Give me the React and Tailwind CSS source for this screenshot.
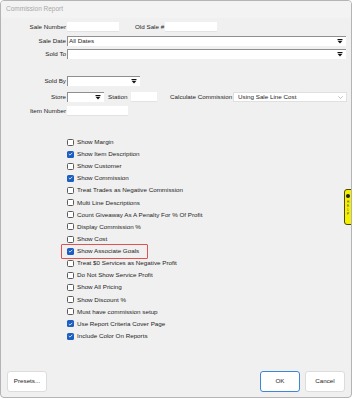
import React from "react";

const OPTIONS = [
  { label: "Show Margin", checked: false },
  { label: "Show Item Description", checked: true },
  { label: "Show Customer", checked: false },
  { label: "Show Commission", checked: true },
  { label: "Treat Trades as Negative Commission", checked: false },
  { label: "Multi Line Descriptions", checked: false },
  { label: "Count Giveaway As A Penalty For % Of Profit", checked: false },
  { label: "Display Commission %", checked: false },
  { label: "Show Cost", checked: false },
  { label: "Show Associate Goals", checked: true, highlight: true },
  { label: "Treat $0 Services as Negative Profit", checked: false },
  { label: "Do Not Show Service Profit", checked: false },
  { label: "Show All Pricing", checked: false },
  { label: "Show Discount %", checked: false },
  { label: "Must have commission setup", checked: false },
  { label: "Use Report Criteria Cover Page", checked: true },
  { label: "Include Color On Reports", checked: true }
];

const Arrow = () => (
  <svg width="6" height="5" viewBox="0 0 6 5" className="shrink-0">
    <rect x="0.5" y="0" width="5" height="1" fill="#111" />
    <path d="M0.5 1.8 H5.5 L3 4.6 Z" fill="#111" />
  </svg>
);

const Label = ({ children, className = "" }) => (
  <span className={`text-right pr-[1px] whitespace-nowrap ${className}`}>{children}</span>
);

const TextBox = ({ className = "" }) => (
  <div className={`h-[10px] bg-white border-b border-[#e2e2e2] shrink-0 ${className}`} />
);

const Combo = ({ value = "", className = "" }) => (
  <div className={`h-[10px] bg-white border-t border-l border-[#8f8f8f] flex items-center justify-between pl-[1px] pr-[3px] shrink-0 ${className}`}>
    <span>{value}</span>
    <Arrow />
  </div>
);

const CheckBox = ({ checked }) =>
  checked ? (
    <span className="w-[7px] h-[7px] rounded-[1.5px] bg-[#1c5fc0] flex items-center justify-center shrink-0">
      <svg width="5" height="4" viewBox="0 0 5 4">
        <path d="M0.8 2 L2 3.1 L4.3 0.8" stroke="#fff" strokeWidth="0.8" fill="none" />
      </svg>
    </span>
  ) : (
    <span className="w-[7px] h-[7px] rounded-[1.5px] bg-white border border-[#5a5a5a] shrink-0" />
  );

export default function App() {
  return (
    <div
      className="w-[353px] h-[399px] bg-white text-[6.25px] leading-none text-[#1e1e1e]"
      style={{ fontFamily: "'Liberation Sans', Arial, sans-serif" }}
    >
      <div className="relative w-[352px] h-[398px] bg-[#f0f0f0] border border-[#b4b4b4] rounded-[4px] flex flex-col overflow-hidden">
        <div className="h-[17px] bg-[#f3f3f3] flex items-center pl-[5px] text-[#a8a8a8] text-[6.5px] shrink-0">
          Commission Report
        </div>

        <div className="flex flex-col pt-[4px]">
          <div className="flex items-center h-[10px]">
            <Label className="w-[66px]">Sale Number</Label>
            <TextBox className="w-[52px]" />
            <span className="ml-[16px] w-[30px] whitespace-nowrap">Old Sale #</span>
            <TextBox className="w-[52px]" />
          </div>

          <div className="flex items-center h-[10px] mt-[4px]">
            <Label className="w-[66px]">Sale Date</Label>
            <Combo value="All Dates" className="w-[279px]" />
          </div>

          <div className="flex items-center h-[10px] mt-[3px]">
            <Label className="w-[66px]">Sold To</Label>
            <Combo className="w-[279px]" />
          </div>

          <div className="flex items-center h-[10px] mt-[17px]">
            <Label className="w-[66px]">Sold By</Label>
            <Combo className="w-[73px]" />
          </div>

          <div className="flex items-center h-[10px] mt-[6px]">
            <Label className="w-[66px]">Store</Label>
            <Combo className="w-[37px]" />
            <span className="ml-[4px] w-[23px] whitespace-nowrap">Station</span>
            <TextBox className="w-[26px]" />
            <span className="ml-[13px] w-[63px] whitespace-nowrap">Calculate Commission</span>
            <div className="h-[10px] w-[114px] bg-white border border-[#e0e0e0] flex items-center justify-between pl-[4px] pr-[3px] shrink-0">
              <span>Using Sale Line Cost</span>
              <svg width="5" height="3" viewBox="0 0 5 3">
                <path d="M0.3 0.3 L2.5 2.5 L4.7 0.3" stroke="#9a9a9a" strokeWidth="0.6" fill="none" />
              </svg>
            </div>
          </div>

          <div className="flex items-center h-[10px] mt-[4px]">
            <Label className="w-[66px]">Item Number</Label>
            <TextBox className="w-[61px]" />
          </div>

          <div className="flex flex-col mt-[20px] pl-[66px]">
            {OPTIONS.map((opt) => (
              <div key={opt.label} className="h-[12.125px] flex items-center">
                <div className="relative flex items-center gap-[3px] whitespace-nowrap">
                  <CheckBox checked={opt.checked} />
                  <span>{opt.label}</span>
                  {opt.highlight && (
                    <span className="absolute left-[-6px] right-[-9px] top-[-4px] bottom-[-4px] border-[1.5px] border-[#e05252] rounded-[1px]" />
                  )}
                </div>
              </div>
            ))}
          </div>
        </div>

        <div className="mt-auto flex items-center justify-between px-[6px] pb-[5px]">
          <button className="w-[40px] h-[21px] bg-white border border-[#dcdcdc] rounded-[3px]">
            Presets...
          </button>
          <div className="flex gap-[5px]">
            <button className="w-[40px] h-[21px] bg-white border border-[#3f86d4] rounded-[3px]">
              OK
            </button>
            <button className="w-[40px] h-[21px] bg-white border border-[#dcdcdc] rounded-[3px]">
              Cancel
            </button>
          </div>
        </div>

        <div className="absolute right-[-1px] top-[188px] w-[8px] h-[36px] bg-[#f4f000] border border-[#4a4a00] rounded-l-[3px] flex flex-col items-center pt-[4px] gap-[2px]">
          <span className="w-[4px] h-[4px] rounded-full bg-[#222]" />
          <span className="flex flex-col items-center text-[3px] leading-[4px] text-[#333]">
            <span>H</span>
            <span>E</span>
            <span>L</span>
            <span>P</span>
          </span>
        </div>
      </div>
    </div>
  );
}
